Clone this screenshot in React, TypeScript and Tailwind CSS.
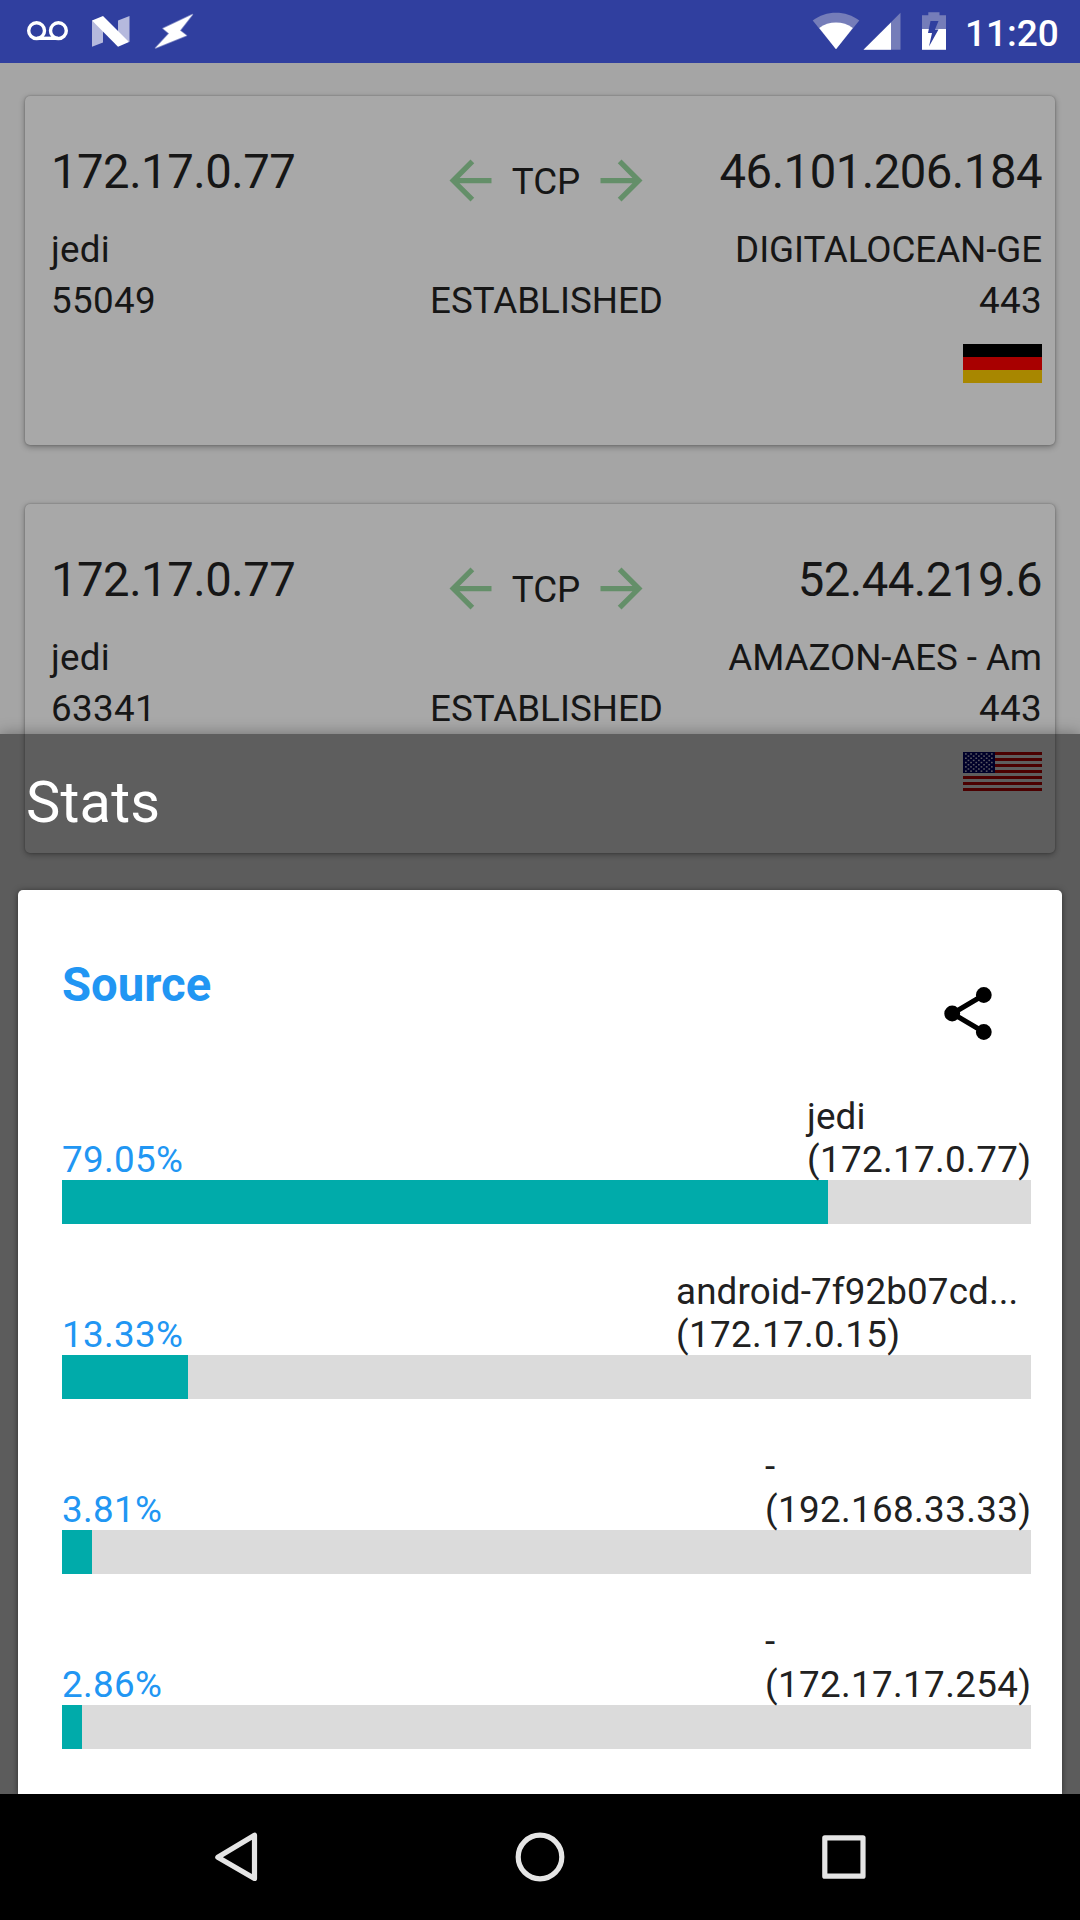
const connections = [
  { src: '172.17.0.77', host: 'jedi', port: '55049', dst: '46.101.206.184', org: 'DIGITALOCEAN-GE', flag: 'de' },
  { src: '172.17.0.77', host: 'jedi', port: '63341', dst: '52.44.219.6', org: 'AMAZON-AES - Am', flag: 'us' },
];

const stats = [
  { pct: '79.05%', fill: 766, name: 'jedi', ip: '(172.17.0.77)', box: 'w-[224px]' },
  { pct: '13.33%', fill: 126, name: 'android-7f92b07cd...', ip: '(172.17.0.15)', box: 'w-[355px]' },
  { pct: '3.81%', fill: 30, name: '-', ip: '(192.168.33.33)', box: 'w-[266px]' },
  { pct: '2.86%', fill: 20, name: '-', ip: '(172.17.17.254)', box: 'w-[266px]' },
];

function StatusBar() {
  return (
    <header className="flex h-[63px] shrink-0 items-center justify-between bg-[#303f9f] text-white">
      <svg width="200" height="63" viewBox="0 0 200 63">
        <g fill="none" stroke="#fff" strokeWidth="3.4">
          <circle cx="36.6" cy="30.7" r="7.9" />
          <circle cx="58.4" cy="30.7" r="7.9" />
          <path d="M36.6 38.3H58.4" />
        </g>
        <path d="M92 20.5L103 25V42.5L92 46.7z M118 20.5L129.5 16V42L118 37z" fill="#b5b9dd" />
        <path d="M92 20.5L103 16L129 42L118 46.7z" fill="#fff" />
        <path
          className="blur-[0.7px]"
          d="M192.5 14.5L163 28.5L169 33.5L155.5 48L186.5 35.5L180 30.5z"
          fill="#fff"
          stroke="#fff"
          strokeOpacity=".4"
          strokeWidth="1.5"
          strokeLinejoin="round"
        />
      </svg>
      <div className="flex items-center">
        <svg width="160" height="63" viewBox="800 0 160 63">
          <path d="M812.7 20.5C826 10 846 10 859.3 20.5L836 49.3z" fill="#757db9" />
          <path d="M819.2 28C829 20.7 843 20.7 852.8 28L836 49.3z" fill="#fff" />
          <path d="M863.5 49.7L900.5 12.7V49.7z" fill="#757db9" />
          <path d="M863.5 49.7L891 22.5V49.7z" fill="#fff" />
          <path d="M922 15.3H928.3V12.3H939.5V15.3H946V30H922z" fill="#757db9" />
          <path d="M922 29H946V49.8H922z" fill="#fff" />
          <path d="M930.5 21H938.5L935 29.5H938.5L929 46.5L932 33H928z" fill="#303f9f" />
        </svg>
        <span className="ml-[5px] mr-[16px] w-[99px] pt-[3px] text-[37px] font-medium leading-[43px]">11:20</span>
      </div>
    </header>
  );
}

function Arrow({ right = false }: { right?: boolean }) {
  return (
    <svg width="63" height="63" viewBox="0 0 24 24" className={right ? 'rotate-180' : ''}>
      <path d="M20 11H7.83l5.59-5.59L12 4l-8 8 8 8 1.41-1.41L7.83 13H20v-2z" fill="#648f69" />
    </svg>
  );
}

function Flag({ country }: { country: string }) {
  if (country === 'de') {
    return (
      <div className="flex h-[39px] w-[79px] flex-col">
        <div className="flex-1 bg-black" />
        <div className="flex-1 bg-[#a80000]" />
        <div className="flex-1 bg-[#a88700]" />
      </div>
    );
  }
  const stars = [];
  for (let r = 0; r < 9; r++) {
    for (let c = r % 2; c < 11; c += 2) {
      stars.push(<rect key={`${r}-${c}`} x={2 + c * 2.6} y={1.2 + r * 2.15} width="1.7" height="1.5" />);
    }
  }
  return (
    <svg width="79" height="39" viewBox="0 0 79 39">
      {[0, 1, 2, 3, 4, 5, 6].map((i) => (
        <rect key={i} y={i * 6} width="79" height="3" fill="#870000" />
      ))}
      <rect width="32" height="21" fill="#00004a" />
      <g fill="#a0a0b0">{stars}</g>
    </svg>
  );
}

function ConnectionCard({ c }: { c: (typeof connections)[number] }) {
  return (
    <section className="grid h-[349px] shrink-0 grid-cols-[1fr_auto_1fr] rounded-[5px] bg-[#a8a8a8] pl-[25px] pr-[13px] pt-[48px] text-[36.75px] leading-[43px] text-[#161616] shadow-[0_2px_6px_rgba(0,0,0,0.32),0_0_2px_rgba(0,0,0,0.3)]">
      <div className="pl-px">
        <p className="text-[47.25px] leading-[56px] tracking-[-0.5px]">{c.src}</p>
        <p className="mt-[28px] tracking-[0.25px]">{c.host}</p>
        <p className="mt-[8px] tracking-[0.36px]">{c.port}</p>
      </div>
      <div className="flex flex-col items-center">
        <div className="mt-[4px] flex h-[64px] items-center">
          <Arrow />
          <span className="w-[88px] pt-[2px] text-center">TCP</span>
          <Arrow right />
        </div>
        <p className="mt-[67px] pl-px">ESTABLISHED</p>
      </div>
      <div className="flex flex-col items-end">
        <p className="text-[47.25px] leading-[56px] tracking-[-0.5px]">{c.dst}</p>
        <p className="mt-[28px] whitespace-nowrap tracking-[-0.08px]">{c.org}</p>
        <p className="mb-[22px] mt-[8px] tracking-[0.36px]">443</p>
        <Flag country={c.flag} />
      </div>
    </section>
  );
}

function StatRow({ s }: { s: (typeof stats)[number] }) {
  return (
    <div className="mb-[45px]">
      <div className="flex translate-y-px items-end justify-between leading-[43px] tracking-[0.36px]">
        <span className="text-[#2196f3]">{s.pct}</span>
        <div className={s.box}>
          <p className="whitespace-nowrap tracking-[0.14px]">{s.name}</p>
          <p className="whitespace-nowrap">{s.ip}</p>
        </div>
      </div>
      <div className="h-[44px] bg-[#dbdbdb]">
        <div className="h-full bg-[#00abaa]" style={{ width: s.fill }} />
      </div>
    </div>
  );
}

export default function App() {
  return (
    <div className="relative flex h-[1920px] w-[1080px] flex-col overflow-hidden bg-[#a5a5a5] font-['Roboto',sans-serif]">
      <StatusBar />
      <main className="flex flex-1 flex-col gap-[59px] px-[25px] pt-[33px]">
        {connections.map((c) => (
          <ConnectionCard key={c.port} c={c} />
        ))}
      </main>
      <div className="absolute inset-x-0 bottom-[126px] flex h-[1060px] flex-col bg-black/44 px-[18px] shadow-[0_0_14px_rgba(0,0,0,0.35)]">
        <h1 className="h-[156px] pl-[8px] pt-[34px] text-[57.75px] leading-[68px] tracking-[0.2px] text-white">Stats</h1>
        <div className="flex-1 overflow-hidden rounded-t-[5px] bg-white pl-[44px] pr-[31px] pt-[66px] text-[36.75px] text-[#212121] shadow-[0_1px_6px_rgba(0,0,0,0.5)]">
          <div className="flex h-[138px] justify-between">
            <h2 className="pt-px text-[47.25px] font-bold leading-[56px] text-[#2196f3]">Source</h2>
            <svg width="63" height="63" viewBox="0 0 63 63" className="mr-[31px] mt-[26px]">
              <path d="M46.8 13L15.5 31.5L46.8 50" fill="none" stroke="#000" strokeWidth="5" />
              <circle cx="46.8" cy="13" r="7.9" />
              <circle cx="15.2" cy="31.5" r="7.9" />
              <circle cx="46.8" cy="50" r="7.9" />
            </svg>
          </div>
          {stats.map((s) => (
            <StatRow key={s.pct} s={s} />
          ))}
        </div>
      </div>
      <nav className="z-10 flex h-[126px] shrink-0 items-center justify-center bg-black">
        <svg width="660" height="70" viewBox="210 1822 660 70" fill="none" stroke="#e5e5e5" strokeWidth="5.2" strokeLinejoin="round">
          <path d="M254.5 1835.2V1878.5L217.8 1857.2z" />
          <circle cx="540" cy="1857" r="21.8" />
          <rect x="824.8" y="1837.8" width="38.2" height="38.4" />
        </svg>
      </nav>
    </div>
  );
}
